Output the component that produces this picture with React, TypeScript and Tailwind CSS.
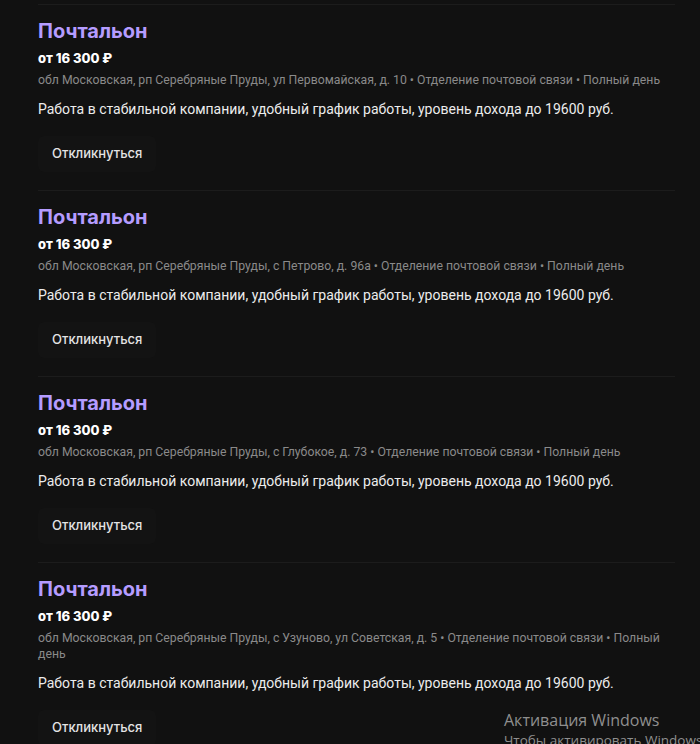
import React from "react";

const jobs = [
  "обл Московская, рп Серебряные Пруды, ул Первомайская, д. 10 • Отделение почтовой связи • Полный день",
  "обл Московская, рп Серебряные Пруды, с Петрово, д. 96а • Отделение почтовой связи • Полный день",
  "обл Московская, рп Серебряные Пруды, с Глубокое, д. 73 • Отделение почтовой связи • Полный день",
  "обл Московская, рп Серебряные Пруды, с Узуново, ул Советская, д. 5 • Отделение почтовой связи • Полный день",
];

const body = { fontFamily: "Roboto, 'Liberation Sans', sans-serif" };

export default function App() {
  return (
    <div
      className="relative w-[700px] h-[744px] overflow-hidden bg-[#111111] pt-[4px] pl-[38px]"
      style={{ fontFamily: "Inter, 'Liberation Sans', sans-serif" }}
    >
      <div className="w-[637px]">
        {jobs.map((addr, i) => (
          <div key={i} className="border-t border-[#1c1c1c] pt-[12px] pb-[18px]">
            <div className="text-[20px] leading-[28px] font-bold text-[#b59cff]">Почтальон</div>
            <div className="mt-[3px] text-[13px] leading-[20px] font-extrabold text-white">от 16 300 ₽</div>
            <div className="mt-[4px] text-[12.25px] leading-[16px] text-[#8a8a8a] pr-[10px]" style={body}>
              {addr}
            </div>
            <div className="mt-[11px] text-[14px] leading-[20px] text-[#ececec]" style={body}>
              Работа в стабильной компании, удобный график работы, уровень дохода до 19600 руб.
            </div>
            <button className="mt-[17px] h-[36px] px-[14px] rounded-md bg-[#131313] text-[13px] font-medium text-[#e4e4e4]">
              Откликнуться
            </button>
          </div>
        ))}
      </div>
      <div
        className="absolute left-[504px] top-[709px] whitespace-nowrap text-[#8f8f8f]"
        style={{ fontFamily: "'Open Sans', 'Noto Sans', sans-serif" }}
      >
        <div className="text-[16px] leading-[22px]">Активация Windows</div>
        <div className="text-[13.5px] leading-[18px]">Чтобы активировать Windows, перейдите в раздел «Параметры».</div>
      </div>
    </div>
  );
}
